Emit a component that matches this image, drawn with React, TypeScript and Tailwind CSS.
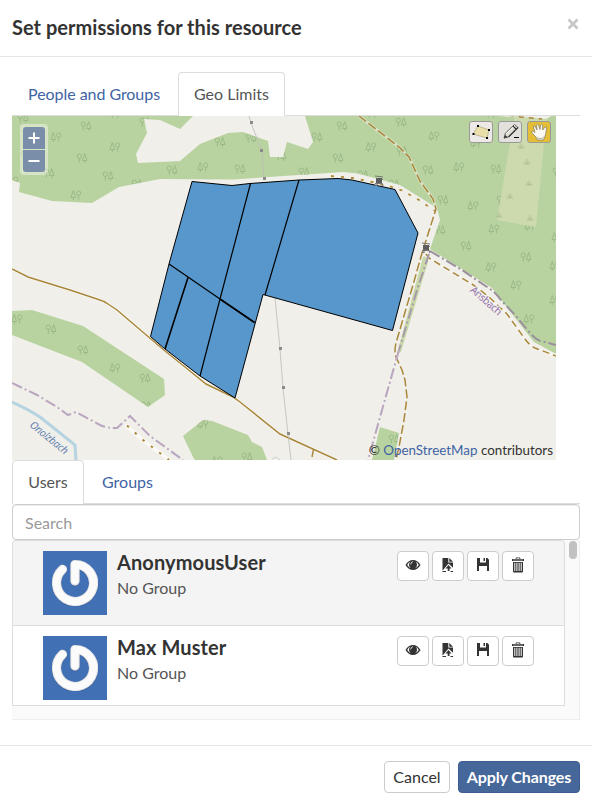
import React from "react";

type Tree = [number, number, 0 | 1];

// Woodland symbols: centre x, centre y, and whether the conifer comes first.
const trees: Tree[] = [
  [23, 118, 0], [86, 126, 0], [56, 137, 1], [115, 147, 1], [82, 158, 0], [49, 173, 0],
  [108, 176, 0], [76, 195, 1], [137, 184, 0], [145, 122, 0], [172, 170, 0], [203, 167, 1],
  [240, 169, 0], [220, 142, 0], [251, 138, 0], [281, 156, 0], [13, 181, 1], [26, 155, 0],
  [115, 113, 1], [342, 126, 0], [371, 147, 1], [317, 137, 0], [338, 158, 0], [304, 172, 0],
  [363, 175, 0], [394, 184, 0], [401, 122, 0], [434, 136, 1], [402, 151, 0], [428, 170, 0],
  [459, 167, 1], [496, 169, 0], [443, 200, 0], [473, 206, 1], [440, 230, 0], [494, 229, 1],
  [466, 246, 0], [526, 257, 0], [491, 267, 1], [516, 285, 1], [557, 237, 1], [555, 266, 1],
  [555, 300, 1], [476, 143, 1], [502, 200, 0], [530, 226, 1], [529, 319, 1], [17, 319, 1],
  [51, 329, 0], [83, 350, 0], [115, 368, 1], [145, 378, 0], [146, 406, 0], [203, 424, 1],
  [247, 457, 0], [217, 461, 1], [394, 439, 0], [372, 113, 0], [491, 113, 0], [558, 172, 0],
];

const grass: [number, number][] = [
  [521, 146], [527, 162], [529, 183], [510, 196], [530, 218], [499, 215],
];

const pylons: [number, number][] = [
  [251, 123], [261, 151], [264, 179], [280, 349], [283, 388], [288, 434],
];

const woods = [
  "M12 116V180L20 183L19 192L52 201L92 203L119 187L160 179L233 179.500L343 172L358 173.500L400 185L437 208L440 220L430 249L492 288L509 310L534 342L556 354V116Z",
  "M12 311L32 310L83 326L164 379L165 395L148 407L82 362L12 335Z",
  "M183 436L203 420L212 421L248 435L252 442L262 447L267 460H195L193 457Z",
  "M380 427L399 433L394 460H372Z",
];

const clearings =
  "M144 119L160 120L180 129L193 116H305L313 142L308 149L287 142L283 157H270L268 141L243 132L228 133L200 144L180 161L138 163L136 154L147 133Z M499 116L545 120L551 116Z";

const trackMain =
  "M359 116L399 147L409 157L420 181L433 199L436 209L422 253L413 285L396 343Q394 351 396 357L402 370L405 380L407 397L404 420L399 447L396 460";
const trackEast = "M426 254L429 258L475 286L489 297L507 314L525 339Q529 345 535 348L556 356";
const footway = "M331 176L353 178L372 182L392 187L402 190.500L419 200L435 211";
const lane =
  "M12 269L28 277L70 290L97 299Q104 301 108 304L117 310L165 351L185 367L206 384L233 397L240 402L280 434L337 460";

function OsmMap() {
  return (
    <svg viewBox="12 116 544 344" className="block h-[344px] w-[544px]" fontFamily="Noto Sans, sans-serif">
      <defs>
        <clipPath id="woods">
          {woods.map((d) => <path key={d} d={d} />)}
        </clipPath>
        <g id="round-tree">
          <circle cx="0" cy="-1.800" r="2.200" />
          <path d="M0 .4V4.500" />
        </g>
        <path id="conifer" d="M0-4.500L-2.300 2.500H2.300ZM0 2.500V5" />
        <g id="stand">
          <path d="M-4-4L4-3M-3-1.500L4-.5M-4 3.500H3L4 6M-2 3V5.500H-4" fill="none" stroke="#777" strokeWidth="1.200" />
          <path d="M-3-2H3V3H-3Z" fill="#5d5d5d" />
        </g>
      </defs>
      <path d="M12 116H556V460H12Z" fill="#f0efea" />
      {woods.map((d) => <path key={d} d={d} fill="#b8d39f" />)}
      <g clipPath="url(#woods)" fill="none" stroke="#94b482" strokeWidth=".8">
        {trees.map(([x, y, coniferFirst], i) => (
          <g key={i}>
            <use href="#round-tree" x={coniferFirst ? x + 2.7 : x - 2.7} y={y} />
            <use href="#conifer" x={coniferFirst ? x - 2.7 : x + 2.7} y={y} />
          </g>
        ))}
      </g>
      <path d={clearings} fill="#f0efea" />
      <path d="M515 116L547 119L544 143L536 227L497 220L510 143Z" fill="#cddaae" />
      {grass.map(([x, y], i) => (
        <path key={i} d={`M${x - 3.5} ${y + 2}H${x + 3.5}M${x} ${y + 2}V${y - 3}M${x} ${y + 2}L${x - 2.5} ${y - 1}M${x} ${y + 2}L${x + 2.5} ${y - 1}`} fill="none" stroke="#a5b98b" strokeWidth=".7" />
      ))}

      <path d="M423 257L430 255L401 352L397 354Z" fill="#c8d8a8" />
      <path d="M12 402Q28 409 40 417L75 445L76 460" fill="none" stroke="#b5d3e1" strokeWidth="3" />
      <path d={trackEast} fill="none" stroke="#f5f3ee" strokeWidth="4" />
      <path d={trackMain} fill="none" stroke="#f5f3ee" strokeWidth="3" opacity=".5" />
      <path d="M125 425L143 440L169 460" fill="none" stroke="#faf9f6" strokeWidth="4" />
      <path d={trackMain} fill="none" stroke="#a9873a" strokeWidth="1.500" strokeDasharray="9 3" />
      <path d={trackEast} fill="none" stroke="#a9873a" strokeWidth="1.500" strokeDasharray="7 4" />
      <path d="M499 114L521 117L542 119" fill="none" stroke="#a9873a" strokeWidth="1.400" strokeDasharray="5 5" />
      <path d={lane} fill="none" stroke="#fff" strokeWidth="3" opacity=".5" />
      <path d={lane} fill="none" stroke="#a9873a" strokeWidth="1.500" />
      <path d="M313.500 449.500L312 457" stroke="#a9873a" strokeWidth="1.400" />
      <path d="M127 425.500L143 440L169 460" fill="none" stroke="#a9873a" strokeWidth="2" strokeDasharray="2.500 8" />

      <g fill="none" strokeWidth="2" strokeDasharray="11 3 2 3">
        <path d="M430 251L462 270L490 289Q496 293 500 299L515 315L530 333Q538 342 545 342L556 345" stroke="#9b8f9d" />
        <path d="M429 254L417 290L399 350" stroke="#a99aaa" />
        <path d="M399 350L397 357L382 410L368 460" stroke="#baa6bf" />
        <path d="M12 383L37 395L57 407L68 415L76 412L100 425Q106 428 117 428L130 416L150 436L183 460" stroke="#baa6bf" />
      </g>

      <path d="M249 116L251 123L262 151L264 179M275 298L280 349L283 388L288 434L291 460" fill="none" stroke="#bbbbb7" strokeWidth=".8" />
      {pylons.map(([x, y], i) => (
        <path key={i} d={`M${x - 1} ${y - 2}h3v3h-3z`} fill="#8b8b89" />
      ))}
      <path d="M272 459L276 457L281 461" fill="none" stroke="#ccc" />

      <g fill="#5797cc" stroke="#000" strokeWidth="1">
        <path d="M192 181.500L232 185.500L250 183.500L299 180L338 178.500L352 180L395 189.500L418 233L392.500 330.500L263 294.500L235 398L200 376L165 349L150.500 336.500L169 264Z" />
        <path fill="none" strokeWidth="1.200" d="M250.500 183.500L220 299L200 376M299 180L265 295M169 264L188 277L220 299L254.500 322.500" />
        <path fill="none" strokeWidth="1.600" d="M188 277.500L165 349M220 299L254.500 322.500" />
      </g>
      <path d={footway} fill="none" stroke="#b08a35" strokeWidth="1.800" strokeDasharray="3 7" />
      <use href="#stand" x="379" y="180" />
      <use href="#stand" x="426" y="247" />

      <g fontSize="10.500" paintOrder="stroke" stroke="#f0efea" strokeWidth="2">
        <text transform="translate(29 426) rotate(39)" fill="#6281b0" fontStyle="italic" textLength="46">Onolzbach</text>
        <text transform="translate(469.500 291) rotate(41)" fill="#9673ad" textLength="38">Ansbach</text>
      </g>
    </svg>
  );
}

function ZoomControl() {
  return (
    <div className="absolute left-2 top-2 flex w-[28px] flex-col gap-px rounded-[4px] bg-white/40 p-[3px]">
      <button className="flex h-[22px] items-center justify-center rounded-t-[3px] bg-[#7b8ea9]" aria-label="Zoom in">
        <svg viewBox="0 0 12 12" className="size-3"><path d="M6 .5V11.500M.5 6H11.500" stroke="#fff" strokeWidth="2" /></svg>
      </button>
      <button className="flex h-[22px] items-center justify-center rounded-b-[3px] bg-[#7b8ea9]" aria-label="Zoom out">
        <svg viewBox="0 0 12 12" className="size-3"><path d="M.5 6H11.500" stroke="#fff" strokeWidth="2" /></svg>
      </button>
    </div>
  );
}

function DrawTools() {
  const button = "h-[22px] w-[24px] rounded-[3px] border border-[#999]";
  return (
    <div className="absolute right-[5px] top-[5px] flex gap-[5px]">
      <button className={`${button} bg-[#ece9e6]`} aria-label="Draw polygon">
        <svg viewBox="0 0 22 20" className="h-5 w-[22px]">
          <path d="M8 4L19 8L17 16L3 12Z" fill="#eadfa8" stroke="#b5ae91" strokeWidth=".8" />
          <path d="M7 3h2v2H7zM18 7h2v2h-2zM16 15h2v2h-2zM2.500 11h2v2h-2z" />
        </svg>
      </button>
      <button className={`${button} bg-[#e3e1dc]`} aria-label="Edit feature">
        <svg viewBox="0 0 22 20" className="h-5 w-[22px]">
          <path d="M5 16L6.500 11L15.500 2.500L19 5.500L9.500 15Z" fill="#ddddd2" stroke="#555" strokeWidth=".9" />
          <path d="M7 12L16 3.500" stroke="#fff" />
          <path d="M9.500 15L19 5.500M14 4L17 7" stroke="#333" strokeWidth="1.100" />
          <path d="M5 16.500L6 13L8.500 15Z" fill="#333" />
          <path d="M15 15.500H20" stroke="#000" />
        </svg>
      </button>
      <button className={`${button} bg-[#e4be37]`} aria-label="Pan">
        <svg viewBox="0 0 22 20" className="h-5 w-[22px]">
          <path d="M9.500 18L8 15L4 11Q3 9 5 9L7 10.500L5.500 5Q5.500 3.500 7 4L9 8L8.500 3Q9.300 1.500 10.500 3L12 7.500L12.500 3Q13.700 1.500 14.500 3L14.700 8L17 5Q18.500 4.500 18.500 6L17.500 13L15.500 18Z" fill="#fbfaf2" stroke="#70685a" strokeWidth=".6" />
          <path d="M8.500 13L10 15.500L14 16L17 13L15 17.500H10Z" fill="#c5c1b0" />
        </svg>
      </button>
    </div>
  );
}

function Avatar() {
  return (
    <svg viewBox="0 0 64 64" className="size-16 shrink-0 bg-[#4170b5]">
      <defs>
        <filter id="bevel" x="-10%" y="-10%" width="120%" height="120%">
          <feDropShadow dx="0" dy=".6" stdDeviation=".7" floodColor="#263f75" floodOpacity=".6" />
        </filter>
      </defs>
      <g fill="none" strokeLinecap="round" strokeLinejoin="round">
        <path d="M32 30V13.500A18.500 18.500 0 1 1 19.500 18.400" stroke="#e3e3e3" strokeWidth="9.200" filter="url(#bevel)" />
        <path d="M32 29.500V13.500A18.500 18.500 0 1 1 19.500 18.400" stroke="#fbfbfb" strokeWidth="7.400" />
      </g>
    </svg>
  );
}

const icons: Record<string, React.ReactNode> = {
  view: (
    <>
      <path fillRule="evenodd" d="M.5 8Q3.500 3 8 3T15.500 8Q12.500 13 8 13T.5 8ZM2.200 8Q4.500 11.500 8 11.500T13.800 8Q12.300 5.300 10.500 4.600Q12 6 12 7.500A4 4 0 1 1 4 7.500Q4 6 5.500 4.600Q3.500 5.500 2.200 8Z" />
      <path d="M8 4.500Q5.500 5.500 5.700 7.500" fill="none" stroke="#fff" strokeWidth=".8" />
    </>
  ),
  download: (
    <>
      <path d="M2.500 1H8.300V5.500H13V10.800L8.500 6.500L3.500 12.500L2.500 13.500Z" />
      <path d="M9.300 1L13 4.700H9.300ZM8.500 8L11.500 11.500H9.500V14H7.700V11.500H5.500ZM2.500 14H6V15H2.500ZM10.500 14H13V15H10.500Z" />
    </>
  ),
  edit: <path fillRule="evenodd" d="M2 1H5V5.500H11V1H12.300L14 2.700V14H12V9H4V14H2ZM8.500 1H10V4H8.500Z" />,
  remove: (
    <path fillRule="evenodd" d="M6 .5H10L10.500 2H14V4H2V2H5.500ZM6.300 2H9.700L9.300 1.300H6.700ZM3 2.800V3.300H13V2.800ZM3 5H13V14.500L12.500 15.500H3.500L3 14.500ZM4.300 5.700V14H5.300V5.700ZM6.400 5.700V14H7.400V5.700ZM8.600 5.700V14H9.600V5.700ZM10.700 5.700V14H11.700V5.700Z" />
  ),
};

function UserRow({ name, shaded }: { name: string; shaded?: boolean }) {
  return (
    <li className={`flex border-x border-[#ddd] px-[30px] pt-[10px] ${shaded ? "h-[86px] rounded-t-[4px] border-y bg-[#f4f4f4]" : "h-[80px] border-b bg-white"}`}>
      <Avatar />
      <div className="-mt-px ml-[10px] grow">
        <h4 className="text-[20px] font-bold leading-[24px] tracking-[0.1px] text-[#333]">{name}</h4>
        <p className="mt-[2px] text-[16px] leading-[24px] text-[#555]">No Group</p>
      </div>
      <div className="flex gap-[3px]">
        {Object.entries(icons).map(([key, icon]) => (
          <button key={key} aria-label={key} className="flex h-[30px] w-[32px] items-center justify-center rounded-[4px] border border-[#ccc] bg-white">
            <svg viewBox="0 0 16 16" className="mb-0.5 mr-px size-4 fill-[#333]">{icon}</svg>
          </button>
        ))}
      </div>
    </li>
  );
}

export default function App() {
  return (
    <div className="flex h-[806px] w-[592px] flex-col overflow-hidden bg-white font-['Lato',sans-serif] text-[16px]">
      <header className="flex h-[57px] shrink-0 justify-between border-b border-[#e5e5e5] px-3">
        <h1 className="pt-[14px] text-[20px] font-bold leading-[26px] tracking-[0.03px] text-[#333]">Set permissions for this resource</h1>
        <button className="mr-px mt-[18px] flex size-[12px]" aria-label="Close">
          <svg viewBox="0 0 12 12" className="size-[12px]"><path d="M1.500 1.500L10.500 10.500M10.500 1.500L1.500 10.500" stroke="#c7c7c7" strokeWidth="2.800" /></svg>
        </button>
      </header>
      <main className="px-3 pt-[15px]">
        <nav className="flex h-[44px] border-b border-[#ddd] leading-[44px]">
          <a className="w-[166px] pl-4 tracking-[-0.05px] text-[#4064a3]">People and Groups</a>
          <a className="-mb-px w-[107px] rounded-t-[4px] border border-b-0 border-[#ddd] bg-white text-center leading-[42px] text-[#555]">Geo Limits</a>
        </nav>
        <div className="relative h-[344px] w-[544px]">
          <OsmMap />
          <ZoomControl />
          <DrawTools />
          <p className="absolute bottom-[1px] right-[3px] text-[13.4px] leading-[18px] text-[#333]">© <a className="text-[#4064a3]">OpenStreetMap</a> contributors</p>
        </div>
        <nav className="flex h-[44px] border-b border-[#ddd] leading-[44px]">
          <a className="-mb-px w-[72px] rounded-t-[4px] border border-b-0 border-[#ddd] bg-white text-center leading-[42px] text-[#555]">Users</a>
          <a className="pl-[18px] text-[#4064a3]">Groups</a>
        </nav>
        <input placeholder="Search" className="block h-[36px] w-full rounded-[4px] border border-[#ccc] px-3 text-[16px] shadow-[inset_0_1px_1px_rgba(0,0,0,0.075)] placeholder:text-[#999]" />
        <div className="flex h-[180px] justify-between border-b border-r border-[#eee] bg-[#fafafa]">
          <ul className="w-[553px]">
            <UserRow name="AnonymousUser" shaded />
            <UserRow name="Max Muster" />
          </ul>
          <div className="mr-[2px] mt-px h-[18px] w-[8px] rounded-full bg-[#c1c1c1]" />
        </div>
      </main>
      <footer className="mt-[25px] flex h-[61px] justify-end gap-2 border-t border-[#e5e5e5] px-3 pt-[15px]">
        <button className="h-[32px] w-[66px] rounded-[4px] border border-[#ccc] text-[#333]">Cancel</button>
        <button className="h-[32px] w-[122px] rounded-[4px] border border-[#3d5c91] bg-[#456799] font-bold tracking-[-0.1px] text-white">Apply Changes</button>
      </footer>
    </div>
  );
}
